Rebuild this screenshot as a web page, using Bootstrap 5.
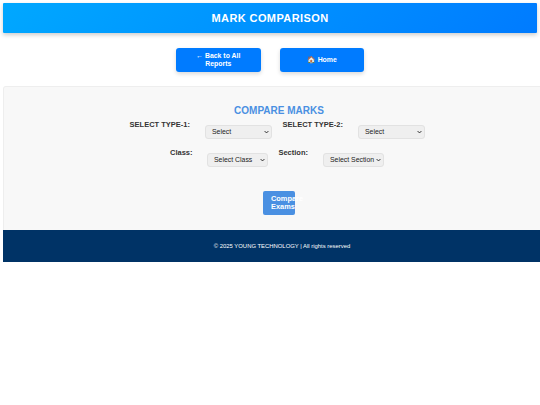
<!DOCTYPE html>
<html lang="en">
<head>
<meta charset="utf-8">
<title>Mark Comparison</title>
<link href="https://cdn.jsdelivr.net/npm/bootstrap@5.3.0/dist/css/bootstrap.min.css" rel="stylesheet">
<style>
html, body { overflow: hidden; height: 405px; }
body { margin: 0; padding: 3px 0 0 3px; font-family: "Liberation Sans", Arial, sans-serif; background: #fff; color: #333; width: 540px; }
.top-bar { width: 534px; height: 30px; background: linear-gradient(135deg, #00a8ff, #007bff); color: #fff; box-shadow: 0 2px 4px rgba(0,0,0,.2); border-radius: 1px; font-size: 11px; font-weight: 700; letter-spacing: .4px; }
.nav-row { gap: 19px; padding-top: 15px; width: 534px; }
.nav-btn { width: 84.5px; height: 24px; background: #007bff; color: #fff; font-size: 6.9px; font-weight: 700; line-height: 8px; border: 0; border-radius: 3px; padding: 0 20px; box-shadow: 0 2px 4px rgba(0,0,0,.15); text-decoration: none; text-align: center; }
.panel { width: 548px; height: 144px; margin-top: 14px; background: #f8f8f8; border: 1px solid #eee; border-bottom: 0; border-radius: 3px 3px 0 0; padding-top: 18px; }
.panel-title { color: #4a90e2; font-size: 10px; font-weight: 700; line-height: 12px; margin: 0; padding-left: 4px; text-align: center; }
.type-row { height: 28px; display: flex; justify-content: center; align-items: flex-start; }
.field-label { font-size: 7.5px; font-weight: 700; line-height: 10px; color: #333; margin: 3px 15px 0 0; white-space: nowrap; text-align: right; }
.w-type { width: 61px; }
.w-class { width: 22px; }
.w-section { width: 30px; }
.pick { font-family: "Liberation Sans", Arial, sans-serif; font-size: 6.9px; height: 14px; color: #222; background-color: #efefef; background-image: url("data:image/svg+xml,%3Csvg xmlns='http://www.w3.org/2000/svg' viewBox='0 0 8 6'%3E%3Cpath d='M1 1.5l3 3 3-3' fill='none' stroke='%23222' stroke-width='1.5'/%3E%3C/svg%3E"); background-repeat: no-repeat; background-position: right 2px center; background-size: 5px 4px; border: 1px solid #e2e2e2; border-radius: 3px; padding: 0 8px 0 6px; margin-top: 8px; appearance: none; }
.pick-lg { width: 67px; }
.pick-sm { width: 61px; }
.pick-gap { margin-right: 10px; }
.go-wrap { padding-left: 4px; }
.go-btn { width: 32px; height: 24px; background: #4a90e2; color: #fff; font-size: 7.4px; font-weight: 700; line-height: 8px; border: 0; border-radius: 2px; padding: 0 0 0 8px; margin-top: 18px; text-align: left; white-space: normal; overflow: visible; }
.foot-bar { width: 558px; height: 32px; background: #003366; color: #fff; font-size: 5.9px; }
</style>
</head>
<body>
<header class="top-bar d-flex align-items-center justify-content-center">MARK COMPARISON</header>
<nav class="nav-row d-flex justify-content-center">
  <a class="nav-btn d-flex align-items-center" href="#">← Back to All Reports</a>
  <a class="nav-btn d-flex align-items-center justify-content-center p-0" href="#">🏠 Home</a>
</nav>
<main class="panel">
  <h2 class="panel-title">COMPARE MARKS</h2>
  <div class="type-row">
    <label class="field-label w-type">SELECT TYPE-1:</label>
    <select class="pick pick-lg pick-gap"><option>Select</option></select>
    <label class="field-label w-type">SELECT TYPE-2:</label>
    <select class="pick pick-lg"><option>Select</option></select>
  </div>
  <div class="type-row">
    <label class="field-label w-class">Class:</label>
    <select class="pick pick-sm pick-gap"><option>Select Class</option></select>
    <label class="field-label w-section">Section:</label>
    <select class="pick pick-sm"><option>Select Section</option></select>
  </div>
  <div class="go-wrap d-flex justify-content-center">
    <button class="go-btn" type="button">Compare Exams</button>
  </div>
</main>
<footer class="foot-bar d-flex align-items-center justify-content-center">© 2025 YOUNG TECHNOLOGY | All rights reserved</footer>
<script src="https://cdn.jsdelivr.net/npm/bootstrap@5.3.0/dist/js/bootstrap.bundle.min.js"></script>
</body>
</html>
